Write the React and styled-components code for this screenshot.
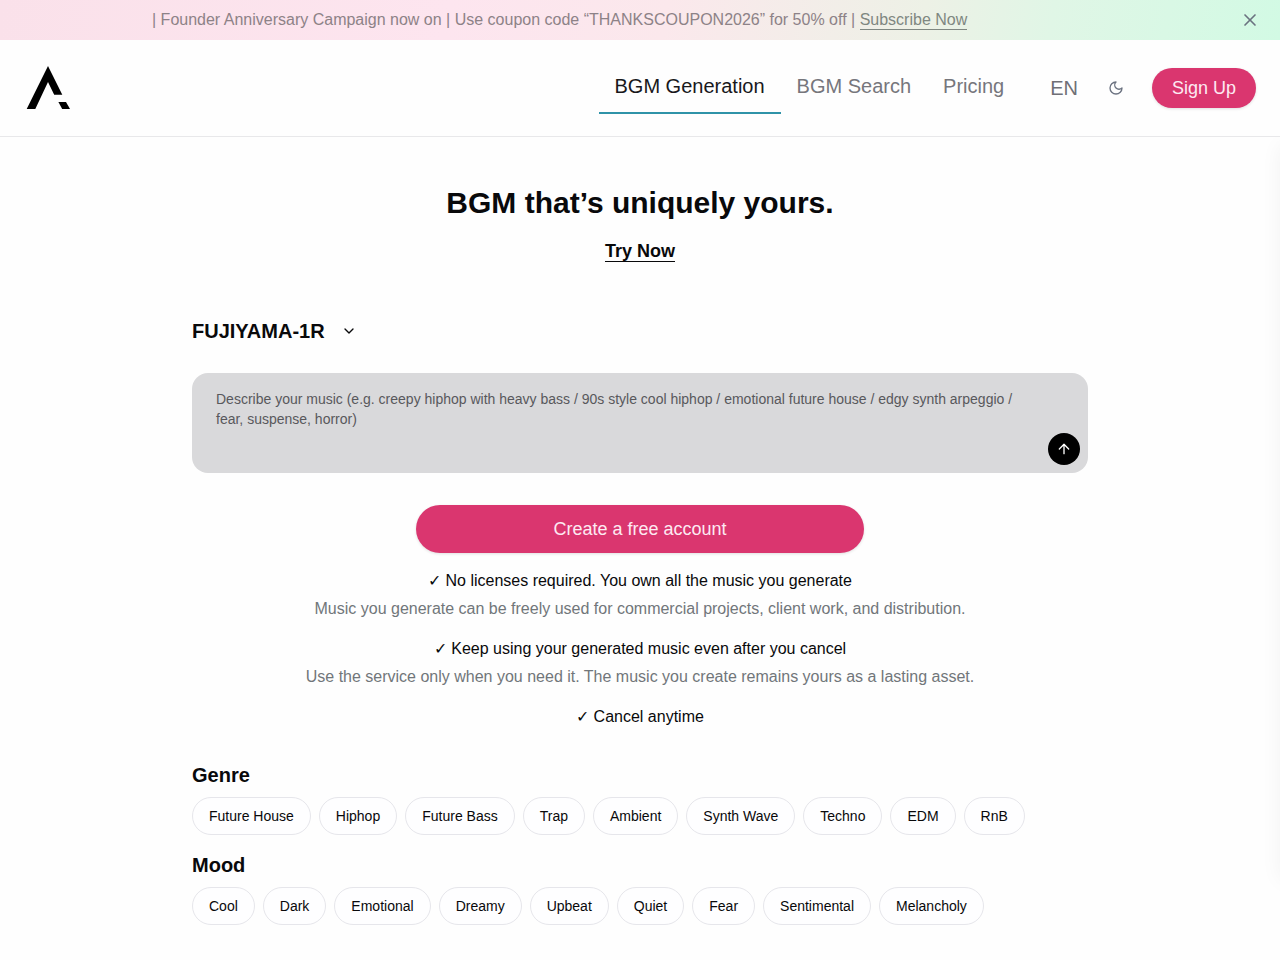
import React, { useState } from "react";
import styled, { createGlobalStyle } from "styled-components";
import { ArrowUp, ChevronDown, X } from "lucide-react";

const GlobalStyle = createGlobalStyle`
  *, *::before, *::after { box-sizing: border-box; }
  body {
    margin: 0;
    background: #fefefe;
    color: #09090b;
    font-family: "Liberation Sans", Arial, sans-serif;
    font-size: 16px;
    line-height: 24px;
  }
  button, select, textarea { font-family: inherit; color: inherit; margin: 0; }
  button { border: 0; background: none; padding: 0; cursor: pointer; }
  h1, h2, p, ul { margin: 0; padding: 0; }
  ul { list-style: none; }
  a { color: inherit; text-decoration: none; }
`;

const Page = styled.div`
  position: relative;
  min-height: 100vh;
  overflow-x: clip;
`;

const Banner = styled.aside`
  display: flex;
  align-items: center;
  height: 40px;
  padding: 0 20px 0 152px;
  background: linear-gradient(100deg, #fae1ea 0%, #fde5ef 35%, #fbe8ec 52%, #edf1e6 72%, #e0f6e6 82%, #d2fae4 100%);
  color: #8d8287;
`;

const BannerText = styled.p`
  flex: 1;
  white-space: nowrap;
  overflow: hidden;
`;

const BannerLink = styled.a`
  padding-bottom: 1px;
  border-bottom: 1px solid currentColor;
  color: #7f8781;
`;

const IconButton = styled.button`
  display: flex;
  color: #6b7280;
`;

const Header = styled.header`
  display: flex;
  align-items: center;
  justify-content: space-between;
  height: 97px;
  padding: 0 24px;
  border-bottom: 1px solid #e8e8ea;
`;

const HeaderEnd = styled.div`
  display: flex;
  align-items: center;
  gap: 28px;
`;

const Logo = styled.svg`
  display: block;
  width: 48px;
  height: 48px;
`;

const Nav = styled.nav`
  display: flex;
`;

const NavLink = styled.a`
  padding: 10px 16px 12px;
  border-bottom: 2px solid ${(p) => (p.$active ? "#2f93a8" : "transparent")};
  color: ${(p) => (p.$active ? "#18181b" : "#76767c")};
  font-size: 20px;
  line-height: 28px;
`;

const LanguageButton = styled.button`
  padding: 0 2px;
  color: #6f6f76;
  font-size: 20px;
  line-height: 28px;
`;

const PrimaryButton = styled.button`
  align-self: center;
  width: ${(p) => (p.$wide ? "448px" : "104px")};
  max-width: 100%;
  height: ${(p) => (p.$wide ? "48px" : "40px")};
  border-radius: 24px;
  background: #da366f;
  color: #fdeaf2;
  font-size: 18px;
  line-height: 28px;
  box-shadow: 0 1px 3px rgba(0, 0, 0, 0.12);
`;

const Main = styled.main`
  display: flex;
  flex-direction: column;
  max-width: 944px;
  margin: 0 auto;
  padding: 48px 24px 32px;
`;

const Title = styled.h1`
  text-align: center;
  font-size: 30px;
  line-height: 36px;
`;

const TryLink = styled.a`
  align-self: center;
  margin-top: 16px;
  font-size: 18px;
  font-weight: 700;
  line-height: 28px;
  text-decoration: underline;
  text-decoration-thickness: 1px;
  text-underline-offset: 4px;
`;

const ModelPicker = styled.label`
  display: flex;
  align-items: center;
  align-self: flex-start;
  gap: 16px;
  margin-top: 52px;
`;

const ModelSelect = styled.select`
  appearance: none;
  border: 0;
  padding: 0;
  background: none;
  height: 28px;
  font-size: 20px;
  font-weight: 700;
  line-height: 28px;
`;

const PromptBox = styled.div`
  position: relative;
  display: flex;
  margin-top: 28px;
`;

const Prompt = styled.textarea`
  width: 100%;
  height: 100px;
  padding: 16px 56px 16px 24px;
  border: 0;
  border-radius: 16px;
  background: #d9d9db;
  font-size: 14px;
  line-height: 20px;
  resize: none;
  &::placeholder { color: #58585c; opacity: 1; }
`;

const SendButton = styled.button`
  position: absolute;
  right: 8px;
  bottom: 8px;
  display: flex;
  align-items: center;
  justify-content: center;
  width: 32px;
  height: 32px;
  border-radius: 50%;
  background: #000;
  color: #fff;
`;

const CallToAction = styled.section`
  display: flex;
  flex-direction: column;
  gap: 16px;
  margin-top: 32px;
`;

const Benefits = styled.ul`
  display: flex;
  flex-direction: column;
  gap: 16px;
  text-align: center;
`;

const Benefit = styled.li`
  display: flex;
  flex-direction: column;
  gap: 4px;
`;

const BenefitNote = styled.p`
  color: #71767a;
`;

const TagGroups = styled.div`
  display: flex;
  flex-direction: column;
  gap: 16px;
  margin-top: 32px;
`;

const TagGroup = styled.section`
  display: flex;
  flex-direction: column;
  gap: 8px;
`;

const TagHeading = styled.h2`
  font-size: 20px;
  line-height: 28px;
`;

const TagList = styled.div`
  display: flex;
  flex-wrap: wrap;
  gap: 8px;
`;

const Tag = styled.button`
  padding: 8px 16px;
  border: 1px solid #e6e6eb;
  border-radius: 20px;
  background: #fefeff;
  font-size: 14px;
  line-height: 20px;
`;

const DrawerClip = styled.div`
  position: absolute;
  inset: 137px 0 0;
  overflow: hidden;
  pointer-events: none;
`;

const Drawer = styled.div`
  position: absolute;
  top: 8px;
  bottom: 80px;
  left: 100%;
  width: 320px;
  box-shadow: 0 0 20px rgba(0, 0, 0, 0.05);
`;

const benefits = [
  {
    title: "No licenses required. You own all the music you generate",
    note: "Music you generate can be freely used for commercial projects, client work, and distribution.",
  },
  {
    title: "Keep using your generated music even after you cancel",
    note: "Use the service only when you need it. The music you create remains yours as a lasting asset.",
  },
  { title: "Cancel anytime" },
];

const groups = [
  {
    name: "Genre",
    tags: ["Future House", "Hiphop", "Future Bass", "Trap", "Ambient", "Synth Wave", "Techno", "EDM", "RnB"],
  },
  {
    name: "Mood",
    tags: ["Cool", "Dark", "Emotional", "Dreamy", "Upbeat", "Quiet", "Fear", "Sentimental", "Melancholy"],
  },
];

function MoonIcon() {
  return (
    <svg
      width="16"
      height="16"
      viewBox="0 0 24 24"
      fill="none"
      stroke="currentColor"
      strokeWidth="2"
      strokeLinecap="round"
      strokeLinejoin="round"
      aria-hidden="true"
    >
      <path d="M12 3a6 6 0 0 0 9 9 9 9 0 1 1-9-9Z" />
    </svg>
  );
}

export default function App() {
  const [prompt, setPrompt] = useState("");
  return (
    <Page>
      <GlobalStyle />
      <Banner>
        <BannerText>
          | Founder Anniversary Campaign now on | Use coupon code “THANKSCOUPON2026” for 50% off |{" "}
          <BannerLink href="#subscribe">Subscribe Now</BannerLink>
        </BannerText>
        <IconButton type="button" aria-label="Close">
          <X size={20} />
        </IconButton>
      </Banner>
      <Header>
        <a href="#home" aria-label="Home">
          <Logo viewBox="0 0 48 48" aria-hidden="true">
            <path d="M24 2 L38.3 30.7 H30.2 L24 18 L11.3 45 H2.7 Z" />
            <path d="M34.4 38 H42 L46 45 H38.2 Z" />
          </Logo>
        </a>
        <HeaderEnd>
          <Nav>
            <NavLink href="#generation" $active>BGM Generation</NavLink>
            <NavLink href="#search">BGM Search</NavLink>
            <NavLink href="#pricing">Pricing</NavLink>
          </Nav>
          <LanguageButton type="button">EN</LanguageButton>
          <IconButton type="button" aria-label="Dark mode">
            <MoonIcon />
          </IconButton>
          <PrimaryButton type="button">Sign Up</PrimaryButton>
        </HeaderEnd>
      </Header>
      <Main>
        <Title>BGM that’s uniquely yours.</Title>
        <TryLink href="#try">Try Now</TryLink>
        <ModelPicker>
          <ModelSelect aria-label="Model">
            <option>FUJIYAMA-1R</option>
          </ModelSelect>
          <ChevronDown size={16} />
        </ModelPicker>
        <PromptBox>
          <Prompt
            aria-label="Describe your music"
            value={prompt}
            onChange={(e) => setPrompt(e.target.value)}
            placeholder="Describe your music (e.g. creepy hiphop with heavy bass / 90s style cool hiphop / emotional future house / edgy synth arpeggio / fear, suspense, horror)"
          />
          <SendButton type="button" aria-label="Generate">
            <ArrowUp size={16} />
          </SendButton>
        </PromptBox>
        <CallToAction>
          <PrimaryButton type="button" $wide>Create a free account</PrimaryButton>
          <Benefits>
            {benefits.map((b) => (
              <Benefit key={b.title}>
                <p>✓ {b.title}</p>
                {b.note && <BenefitNote>{b.note}</BenefitNote>}
              </Benefit>
            ))}
          </Benefits>
        </CallToAction>
        <TagGroups>
          {groups.map((g) => (
            <TagGroup key={g.name}>
              <TagHeading>{g.name}</TagHeading>
              <TagList>
                {g.tags.map((t) => (
                  <Tag key={t} type="button">{t}</Tag>
                ))}
              </TagList>
            </TagGroup>
          ))}
        </TagGroups>
      </Main>
      <DrawerClip aria-hidden="true">
        <Drawer />
      </DrawerClip>
    </Page>
  );
}
